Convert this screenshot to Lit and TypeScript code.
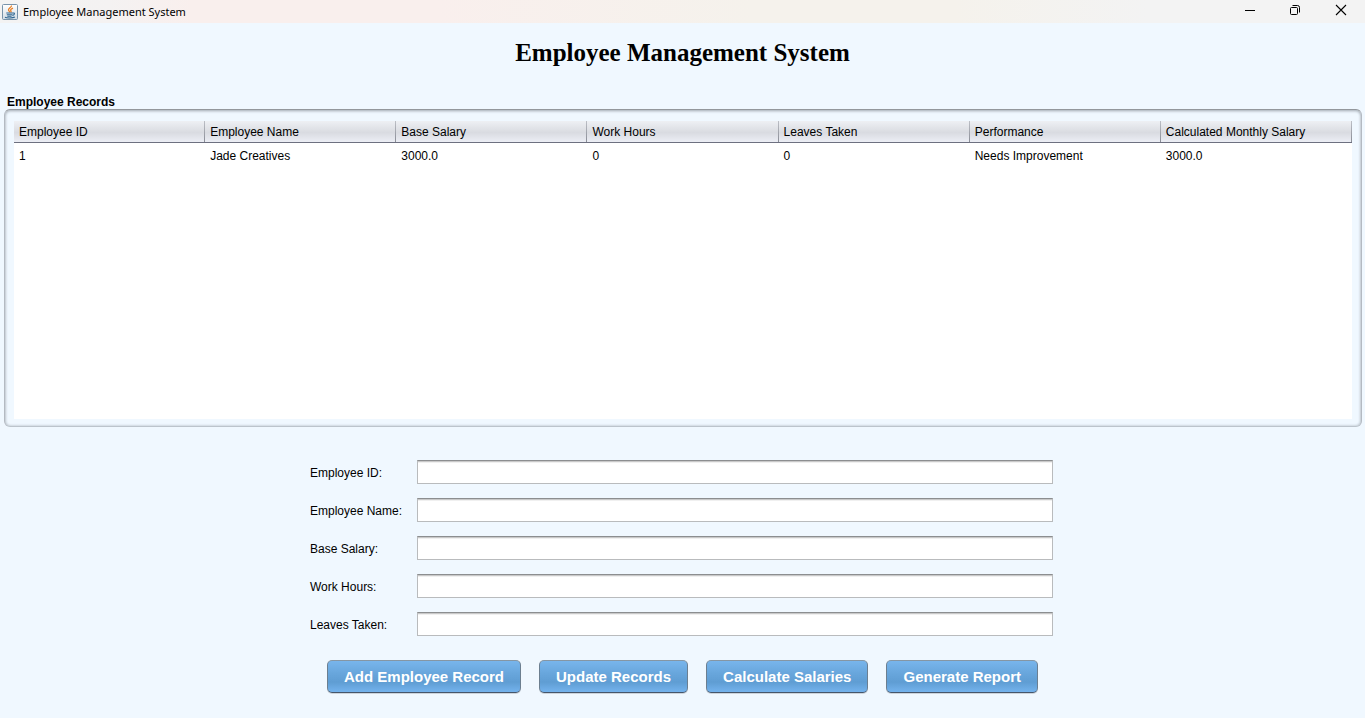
import { LitElement, html, css } from "lit";
import { customElement, state } from "lit/decorators.js";

interface Employee {
  id: string;
  name: string;
  base: string;
  hours: string;
  leaves: string;
  performance: string;
  salary: string;
}

const COLUMNS = [
  "Employee ID",
  "Employee Name",
  "Base Salary",
  "Work Hours",
  "Leaves Taken",
  "Performance",
  "Calculated Monthly Salary",
];

const FIELDS = [
  { id: "employee-id", label: "Employee ID:" },
  { id: "employee-name", label: "Employee Name:" },
  { id: "base-salary", label: "Base Salary:" },
  { id: "work-hours", label: "Work Hours:" },
  { id: "leaves-taken", label: "Leaves Taken:" },
];

const ACTIONS = ["Add Employee Record", "Update Records", "Calculate Salaries", "Generate Report"];

@customElement("window-bar")
export class WindowBar extends LitElement {
  static styles = css`
    :host {
      display: flex;
      align-items: flex-start;
      justify-content: space-between;
      height: 23px;
      background: linear-gradient(90deg, #f3f3f3 0, #f4f2f2 8%, #f9efed 14%, #f9efed 32%, #f5f2ec 55%, #f5f2ec 70%, #f3f3f3 84%);
    }
    .caption {
      display: flex;
      align-items: center;
      gap: 5px;
      padding-left: 2px;
      font: 11px/23px "Noto Sans", sans-serif;
      color: #000;
    }
    .controls {
      display: flex;
    }
    .control {
      display: flex;
      align-items: center;
      justify-content: center;
      width: 45px;
      height: 20px;
      padding: 0;
      border: 0;
      background: none;
    }
    .control:last-child {
      width: 48px;
    }
    svg {
      display: block;
    }
  `;

  render() {
    return html`
      <div class="caption">
        <svg width="16" height="16" viewBox="0 0 16 16" aria-hidden="true">
          <defs>
            <linearGradient id="tile" x1="0" y1="0" x2="0" y2="1">
              <stop offset="0" stop-color="#fff" />
              <stop offset="1" stop-color="#d3dde6" />
            </linearGradient>
          </defs>
          <rect x=".5" y=".5" width="15" height="15" rx="1" fill="url(#tile)" stroke="#7893aa" />
          <path d="M9.400 1.500C10 3.400 6.200 4.200 6.500 6c.1.900 1.100 1.400 1.300 2.300M11 4.200c-1.300.5-2.600 1.300-2.300 2.300.2.700.9 1 .1 1.900" fill="none" stroke="#ea7f24" stroke-width="1.300" />
          <path d="M4.300 9h6.200M4.800 10.700h5.500M5.300 12.300h4.300M10.600 9.100c2.600-.8 2.400 1.900-.2 2.300M3 13.300c1.500 1 7.800 1 9.900-.2" fill="none" stroke="#2f6590" stroke-width="1.100" />
        </svg>
        <span>Employee Management System</span>
      </div>
      <div class="controls">
        <button class="control" aria-label="Minimize">
          <svg width="12" height="12" viewBox="0 0 12 12"><path d="M1 6.500h10" stroke="#000" /></svg>
        </button>
        <button class="control" aria-label="Restore">
          <svg width="12" height="12" viewBox="0 0 12 12" fill="none" stroke="#000">
            <rect x="1.500" y="3.500" width="7" height="7" rx="1" />
            <path d="M3.500 1.500H8.500a2 2 0 0 1 2 2v5" />
          </svg>
        </button>
        <button class="control" aria-label="Close">
          <svg width="12" height="12" viewBox="0 0 12 12"><path d="M1 1l10 10M11 1L1 11" stroke="#000" stroke-width="1.100" /></svg>
        </button>
      </div>
    `;
  }
}

@customElement("records-table")
export class RecordsTable extends LitElement {
  static properties = { rows: { attribute: false } };
  declare rows: Employee[];

  static styles = css`
    :host {
      display: block;
      background: #fff;
    }
    .grid {
      width: 100%;
      table-layout: fixed;
      border-collapse: separate;
      border-spacing: 0;
      font-size: 12px;
      line-height: 16px;
      color: #000;
    }
    .head {
      height: 22px;
      box-sizing: border-box;
      padding: 0 0 0 5px;
      text-align: left;
      font-weight: normal;
      white-space: nowrap;
      border-bottom: 1px solid #6d7080;
      background:
        linear-gradient(#bcbfc6, #8a8d96) right / 1px 100% no-repeat,
        linear-gradient(#eef0f4 0, #dddfe4 45%, #d9dbe1 55%, #eceef5 100%);
    }
    .cell {
      height: 25px;
      padding: 0 0 0 5px;
      white-space: nowrap;
    }
  `;

  constructor() {
    super();
    this.rows = [];
  }

  render() {
    return html`
      <table class="grid" aria-label="Employee Records">
        <thead>
          <tr>${COLUMNS.map((c) => html`<th class="head" scope="col">${c}</th>`)}</tr>
        </thead>
        <tbody>
          ${this.rows.map(
            (r) => html`<tr>
              ${[r.id, r.name, r.base, r.hours, r.leaves, r.performance, r.salary].map(
                (v) => html`<td class="cell">${v}</td>`
              )}
            </tr>`
          )}
        </tbody>
      </table>
    `;
  }
}

@customElement("app-root")
export class AppRoot extends LitElement {
  @state() private rows: Employee[] = [
    {
      id: "1",
      name: "Jade Creatives",
      base: "3000.0",
      hours: "0",
      leaves: "0",
      performance: "Needs Improvement",
      salary: "3000.0",
    },
  ];

  static styles = css`
    :host {
      display: flex;
      flex-direction: column;
      min-height: 100vh;
      background: #f0f8ff;
      font-family: "Liberation Sans", Arial, sans-serif;
      font-size: 12px;
      color: #000;
    }
    .title {
      margin: 0;
      padding: 15px 0 27px;
      text-align: center;
      font: bold 25px/30px "Liberation Serif", "Times New Roman", serif;
    }
    .records {
      flex: 1;
      display: flex;
      flex-direction: column;
      padding: 0 3px 0 4px;
    }
    .legend {
      margin: 0;
      padding-left: 3px;
      font-size: 12px;
      line-height: 14px;
      font-weight: bold;
    }
    .frame {
      flex: 1;
      display: flex;
      padding: 11px 9px 7px;
      border: 1px solid #b4bac2;
      border-top-color: #93979c;
      border-bottom-color: #bcc4cc;
      border-radius: 6px;
      box-shadow: inset 0 1px 3px #a9b0b8, inset 0 0 3px #c3ccd5;
    }
    .table {
      flex: 1;
    }
    .form {
      display: grid;
      grid-template-columns: 107px 1fr;
      align-items: center;
      row-gap: 14px;
      box-sizing: border-box;
      width: 100%;
      max-width: 745px;
      margin: 33px auto 0;
      padding-right: 2px;
    }
    .label {
      padding-top: 2px;
      line-height: 22px;
    }
    .field {
      box-sizing: border-box;
      width: 100%;
      height: 24px;
      padding: 0 6px;
      border: 1px solid #b9bbbd;
      border-top-color: #8c8e90;
      border-radius: 0;
      outline: none;
      background: #fff;
      box-shadow: inset 0 1px #c9c9c9, inset 0 2px #f0f0f0;
      font: inherit;
    }
    .actions {
      display: flex;
      flex-wrap: wrap;
      justify-content: center;
      gap: 18px;
      padding: 24px 0 25px;
    }
    .action {
      height: 33px;
      padding: 0 16px;
      border: 1px solid #6c7f90;
      border-top-color: #8596a4;
      border-bottom-color: #46566a;
      border-radius: 5px;
      background: linear-gradient(#78b5ec 0, #68a6dc 40%, #5f9dd3 68%, #74b3ed 100%);
      box-shadow: 0 1px #ccd4dc;
      color: #fff;
      font: bold 15px/29px "Liberation Sans", Arial, sans-serif;
    }
  `;

  render() {
    return html`
      <window-bar></window-bar>
      <h1 class="title">Employee Management System</h1>
      <section class="records">
        <h2 class="legend">Employee Records</h2>
        <div class="frame"><records-table class="table" .rows=${this.rows}></records-table></div>
      </section>
      <form class="form" @submit=${(e: Event) => e.preventDefault()}>
        ${FIELDS.map(
          (f) => html`<label class="label" for=${f.id}>${f.label}</label>
            <input class="field" type="text" id=${f.id} />`
        )}
      </form>
      <div class="actions">
        ${ACTIONS.map((a) => html`<button class="action" type="button">${a}</button>`)}
      </div>
    `;
  }
}
